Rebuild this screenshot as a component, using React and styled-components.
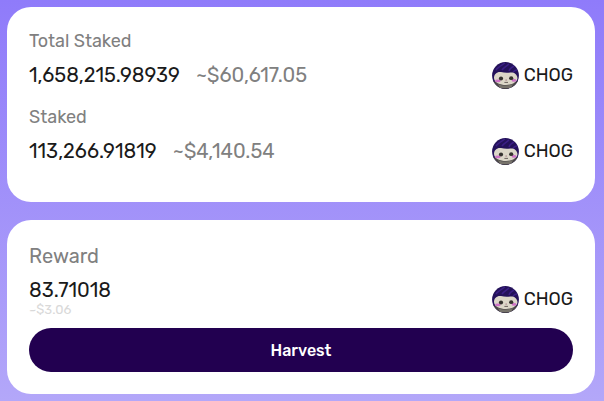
import React from 'react';
import styled, { createGlobalStyle } from 'styled-components';

const GlobalStyle = createGlobalStyle`
  html {
    min-height: 100%;
    background: linear-gradient(180deg, #8f7bfa 0%, #b3a7f9 100%);
  }

  body {
    margin: 0;
    font-family: Rubik, Roboto, 'Liberation Sans', sans-serif;
    color: #1a1a1a;
  }
`

const StyledPage = styled.main`
  display: flex;
  flex-direction: column;
  gap: 18px;
  padding: 7px 9px 7px 7px;
`

const StyledCard = styled.section`
  display: flex;
  flex-direction: column;
  background-color: #fff;
  border-radius: 24px;
  padding: ${({ $reward }) => ($reward ? '24px 22px 22px' : '22px 22px 37px')};
`

const StyledGroup = styled.div`
  & + & {
    margin-top: 16px;
  }
`

const StyledLabel = styled.div`
  margin-bottom: ${({ $large }) => ($large ? '10px' : '8px')};
  color: #808080;
  font-size: ${({ $large }) => ($large ? '20px' : '18px')};
  line-height: 24px;
`

const StyledRow = styled.div`
  display: flex;
  align-items: center;
  justify-content: space-between;
  min-height: ${({ $tall }) => ($tall ? '42px' : '28px')};
`

const StyledAmounts = styled.div`
  display: flex;
  flex-direction: ${({ $stacked }) => ($stacked ? 'column' : 'row')};
  align-self: ${({ $stacked }) => ($stacked ? 'flex-start' : 'center')};
  gap: ${({ $stacked }) => ($stacked ? '0' : '16px')};
`

const StyledAmount = styled.span`
  font-size: 20px;
  line-height: 24px;
`

const StyledUsd = styled(StyledAmount)`
  color: #808080;
`

const StyledSmallUsd = styled.span`
  color: #d9d9d9;
  font-size: 13px;
  line-height: 16px;
`

const StyledToken = styled.div`
  display: flex;
  align-items: center;
  gap: 5px;
  font-size: 18px;
  line-height: 24px;
`

const StyledAvatar = styled.svg`
  width: 27px;
  height: 27px;
  flex: none;
`

const StyledButton = styled.button`
  width: 100%;
  height: 44px;
  margin-top: 8px;
  border: 0;
  border-radius: 22px;
  background-color: #220050;
  color: #fff;
  font-family: inherit;
  font-size: 16px;
  font-weight: 500;
  cursor: pointer;

  &:hover {
    background-color: #32106a;
  }
`

const ChogAvatar = () => (
  <StyledAvatar viewBox="0 0 27 27" aria-hidden="true">
    <defs>
      <clipPath id="chog-clip">
        <circle cx="13.5" cy="13.5" r="13.4" />
      </clipPath>
    </defs>
    <g clipPath="url(#chog-clip)">
      <rect width="27" height="27" fill="#24125a" />
      {/* hair */}
      <path d="M4 8C6 5 10 3 13 1M10 8C12 5 15 4 17 2M17 9C18 6 20 5 22 4M21 10C22 9 23 8 25 8" fill="none" stroke="#3b1f86" strokeWidth="1.5" />
      {/* body */}
      <path d="M0 18C6 23 21 23 27 18V27H0Z" fill="#4a4747" />
      <path d="M6 22C10 24 17 24 21 22L19 26H8Z" fill="#77736b" />
      {/* face */}
      <path d="M2 16C2 12 5 9.5 9 10C12 10.8 15 11 18 10.5C22 10 25 12 25.5 16C25.5 20 20 23 14 23C8 23 2 20.5 2 16Z" fill="#dcd7c8" />
      <ellipse cx="5.8" cy="18.9" rx="2.8" ry="1.3" fill="#cf73c6" />
      <ellipse cx="22" cy="18.4" rx="2.4" ry="1.3" fill="#cf73c6" />
      <ellipse cx="9" cy="16.5" rx="2.1" ry="1.9" fill="#35332f" />
      <ellipse cx="19.2" cy="16.2" rx="2.1" ry="1.9" fill="#35332f" />
      <ellipse cx="14.2" cy="18" rx="1" ry=".5" fill="#a77987" />
      <path d="M12.4 20.4H16" fill="none" stroke="#5c5550" strokeWidth=".9" />
    </g>
  </StyledAvatar>
)

const Token = () => (
  <StyledToken>
    <ChogAvatar />
    <span>CHOG</span>
  </StyledToken>
)

const stakes = [
  { label: 'Total Staked', amount: '1,658,215.98939', usd: '~$60,617.05' },
  { label: 'Staked', amount: '113,266.91819', usd: '~$4,140.54' },
];

const App = () => (
  <>
    <GlobalStyle />
    <StyledPage>
      <StyledCard>
        {stakes.map(({ label, amount, usd }) => (
          <StyledGroup key={label}>
            <StyledLabel>{label}</StyledLabel>
            <StyledRow>
              <StyledAmounts>
                <StyledAmount>{amount}</StyledAmount>
                <StyledUsd>{usd}</StyledUsd>
              </StyledAmounts>
              <Token />
            </StyledRow>
          </StyledGroup>
        ))}
      </StyledCard>
      <StyledCard $reward>
        <StyledLabel $large>Reward</StyledLabel>
        <StyledRow $tall>
          <StyledAmounts $stacked>
            <StyledAmount>83.71018</StyledAmount>
            <StyledSmallUsd>~$3.06</StyledSmallUsd>
          </StyledAmounts>
          <Token />
        </StyledRow>
        <StyledButton type="button">Harvest</StyledButton>
      </StyledCard>
    </StyledPage>
  </>
)

export default App
